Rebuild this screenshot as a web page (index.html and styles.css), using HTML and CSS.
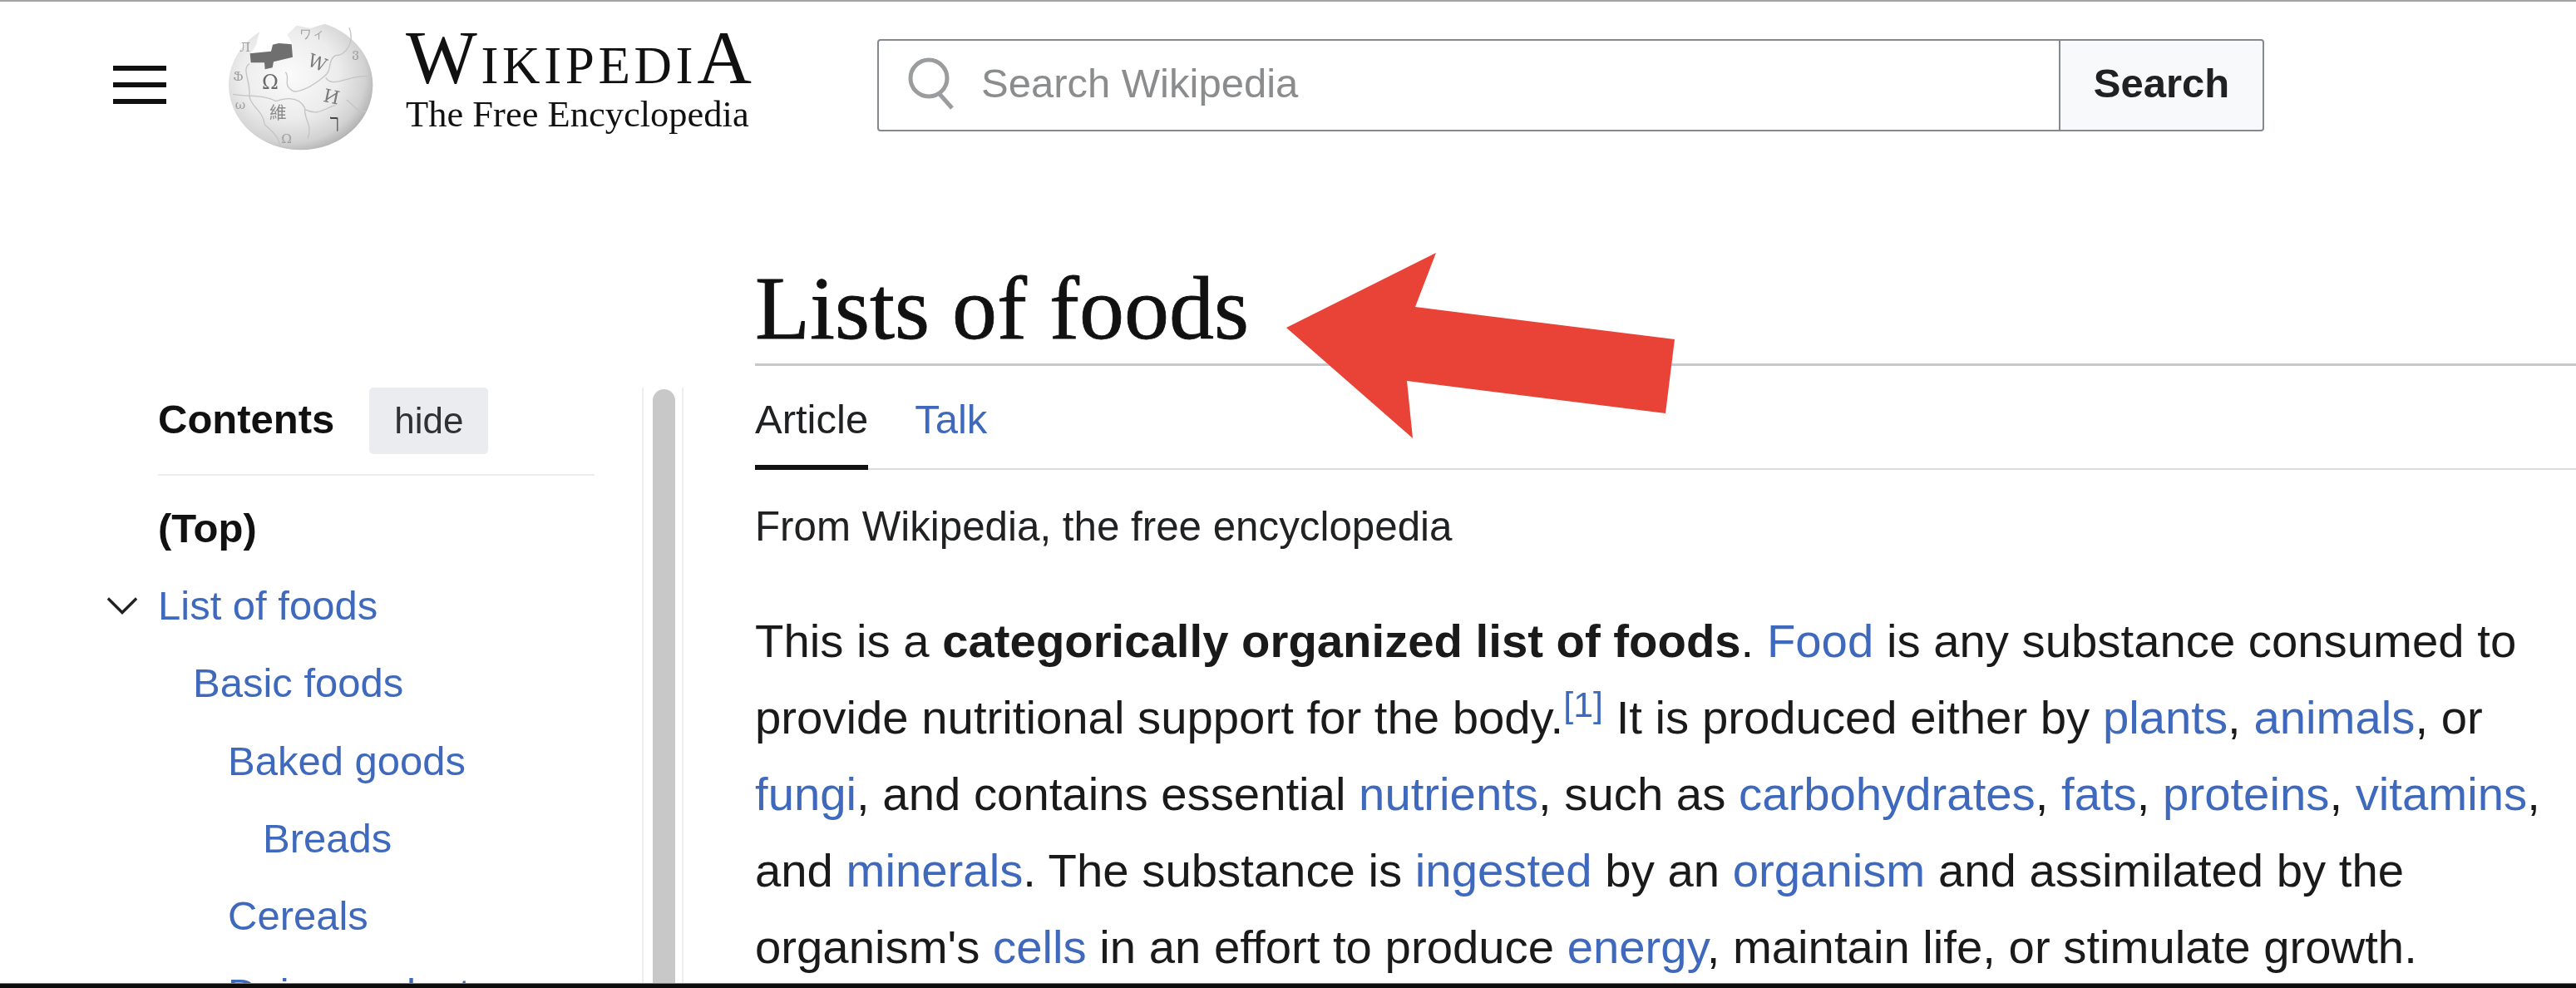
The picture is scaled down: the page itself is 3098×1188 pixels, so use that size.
FILE: index.html
```html
<!DOCTYPE html>
<html lang="en">
<head>
<meta charset="utf-8">
<title>Lists of foods - Wikipedia</title>
<link rel="stylesheet" href="styles.css">
</head>
<body>
<div class="page">
  <header class="header">
    <svg class="burger" viewBox="0 0 64 48" aria-hidden="true"><path d="M0 4h64M0 24h64M0 44h64" stroke="#101010" stroke-width="6"/></svg>
    <svg class="globe" viewBox="0 0 600 540" aria-hidden="true">
      <defs>
        <radialGradient id="gl" cx="0.42" cy="0.42" r="0.62">
          <stop offset="0" stop-color="#fbfbfb"/>
          <stop offset="0.55" stop-color="#ececec"/>
          <stop offset="0.85" stop-color="#d2d2d2"/>
          <stop offset="1" stop-color="#b0b0b0"/>
        </radialGradient>
      </defs>
      <ellipse cx="305" cy="277" rx="260" ry="234" fill="url(#gl)"/>
      <path d="M150 30V52L170 45C165 70 150 95 146 130L125 162 200 155 205 130 225 125 275 128 256 95 290 62 340 72 430 44V20H150Z" fill="#fff"/>
      <path d="M122 163 198 155 204 131 226 126 272 130 276 176 207 193 203 214 176 220 174 196 125 196Z" fill="#6f6f6f"/>
      <g fill="none" stroke="#c4c4c4" stroke-width="4">
        <path d="M250 230C270 255 235 275 280 300 320 300 360 270 390 245 420 225 400 190 430 170 470 170 500 120 480 70"/>
        <path d="M60 310C110 320 170 310 215 335 260 320 300 320 320 360 315 400 350 420 330 470"/>
        <path d="M395 250C420 290 480 240 545 245M470 330C500 350 510 380 540 370M320 365C370 390 390 360 430 350"/>
        <path d="M120 200C90 220 125 260 120 320 130 360 170 370 175 420 210 450 230 470 230 500"/>
      </g>
      <g class="glyphs">
        <text class="gl-big" x="165" y="292">Ω</text>
        <text class="gl-mid" x="0" y="0" transform="translate(325 205) rotate(22)">W</text>
        <text class="gl-mid" x="0" y="0" transform="translate(383 335) rotate(12)">И</text>
        <text class="gl-cjk" x="192" y="400">維</text>
        <text class="gl-dark" x="410" y="432">ך</text>
        <text class="gl-small" x="300" y="108">ワィ</text>
        <text class="gl-small" x="490" y="178">ვ</text>
        <text class="gl-small" x="60" y="262">Ֆ</text>
        <text class="gl-small" x="68" y="362">ω</text>
        <text class="gl-small" x="235" y="485">Ω</text>
        <text class="gl-small" x="85" y="155">Л</text>
      </g>
    </svg>
    <div class="wordmark">
      <div class="wm-title"><span class="wm-big">W</span><span class="wm-caps">IKIPEDI</span><span class="wm-big">A</span></div>
      <div class="wm-sub">The Free Encyclopedia</div>
    </div>
    <form class="search">
      <div class="search-field">
        <svg class="search-icon" viewBox="0 0 60 64" aria-hidden="true"><circle cx="26" cy="26" r="22" fill="none" stroke="#9a9c9e" stroke-width="5"/><path d="M38 44 54 62" stroke="#9a9c9e" stroke-width="5"/></svg>
        <span class="search-ph">Search Wikipedia</span>
      </div>
      <div class="search-btn">Search</div>
    </form>
  </header>

  <div class="layout">
    <aside class="side">
      <nav class="toc">
        <div class="toc-head"><strong class="toc-title">Contents</strong><span class="toc-hide">hide</span></div>
        <ul class="toc-list">
          <li class="toc-row toc-top">(Top)</li>
          <li class="toc-row"><svg class="chev" viewBox="0 0 40 24" aria-hidden="true"><path d="M2 3 20 21 38 3" fill="none" stroke="#202122" stroke-width="3.5"/></svg><a>List of foods</a></li>
          <li class="toc-row l2"><a>Basic foods</a></li>
          <li class="toc-row l3"><a>Baked goods</a></li>
          <li class="toc-row l4"><a>Breads</a></li>
          <li class="toc-row l3"><a>Cereals</a></li>
          <li class="toc-row l3"><a>Dairy products</a></li>
        </ul>
      </nav>
      <div class="scroll"><div class="thumb"></div></div>
    </aside>
    <main class="main">
      <h1 class="title">Lists of foods</h1>
      <div class="tabs"><span class="tab active">Article</span><a class="tab">Talk</a></div>
      <div class="from">From Wikipedia, the free encyclopedia</div>
      <p class="para">This is a <b>categorically organized list of foods</b>. <a>Food</a> is any substance consumed to provide nutritional support for the body.<sup>[1]</sup> It is produced either by <a>plants</a>, <a>animals</a>, or <a>fungi</a>, and contains essential <a>nutrients</a>, such as <a>carbohydrates</a>, <a>fats</a>, <a>proteins</a>, <a>vitamins</a>, and <a>minerals</a>. The substance is <a>ingested</a> by an <a>organism</a> and assimilated by the organism's <a>cells</a> in an effort to produce <a>energy</a>, maintain life, or stimulate growth.</p>
    </main>
  </div>
  <div class="bottom-bar"></div>

  <svg class="arrow" viewBox="0 0 3098 1188" aria-hidden="true"><polygon points="1547,394 1727,304 1702,369 2014,408 2003,497 1692,458 1699,527" fill="#e84336"/></svg>
</div>
</body>
</html>
```
FILE: styles.css
```css
* { box-sizing: border-box; }
html, body { margin: 0; padding: 0; background: #fff; }
body { font-family: "Liberation Sans", Arial, sans-serif; color: #202122; }
a { color: #3f69bc; text-decoration: none; }

.page {
  position: relative;
  width: 3098px;
  height: 1188px;
  display: flex;
  flex-direction: column;
  overflow: hidden;
  border-top: 2px solid #a4a4a4;
  filter: blur(0.7px);
}

.header {
  flex: none;
  height: 198px;
  display: flex;
  align-items: flex-start;
  padding-left: 136px;
}
.burger { width: 64px; height: 48px; margin-top: 76px; flex: none; }
.globe { width: 200px; height: 180px; margin-left: 60px; margin-top: 8px; flex: none; }
.glyphs text { font-family: "DejaVu Serif", serif; fill: #8b8b8b; }
.gl-big { font-size: 72px; fill: #6a6a6a !important; }
.gl-mid { font-size: 66px; fill: #7a7a7a !important; }
.gl-cjk { font-size: 62px; font-family: "Noto Sans CJK TC", sans-serif !important; fill: #8a8a8a !important; }
.gl-dark { font-size: 70px; fill: #444 !important; }
.gl-small { font-size: 46px; fill: #a0a0a0 !important; }

.wordmark { margin-left: 28px; width: 440px; flex: none; font-family: "Liberation Serif", serif; color: #111; }
.wm-title { margin-top: 26px; height: 84px; line-height: 84px; letter-spacing: 4.6px; white-space: nowrap; }
.wm-big { font-size: 91px; }
.wm-caps { font-size: 63px; }
.wm-sub { font-size: 44.5px; line-height: 44px; margin-top: 3px; white-space: nowrap; }

.search { display: flex; margin-left: 127px; margin-top: 45px; width: 1668px; height: 111px; flex: none; }
.search-field {
  flex: 1;
  display: flex;
  align-items: center;
  gap: 29px;
  padding-left: 34px;
  padding-bottom: 5px;
  border: 2px solid #85888c;
  border-radius: 4px 0 0 4px;
  background: #fff;
}
.search-icon { width: 60px; height: 64px; flex: none; }
.search-ph { font-size: 49px; color: #8a8c8e; }
.search-btn {
  width: 245px;
  display: flex;
  align-items: center;
  justify-content: center;
  padding-bottom: 5px;
  border: 2px solid #85888c;
  border-left: none;
  border-radius: 0 4px 4px 0;
  background: #f8f9fa;
  font-size: 49px;
  font-weight: bold;
}

.layout { flex: 1; min-height: 0; display: grid; grid-template-columns: 908px 1fr; }

.side { display: flex; min-height: 0; padding: 266px 0 0 190px; }
.toc { width: 525px; flex: none; }
.toc-head { display: flex; align-items: center; justify-content: flex-start; height: 80px; }
.toc-title { font-size: 49px; color: #111; padding-bottom: 4px; }
.toc-hide {
  margin-left: 42px;
  width: 143px;
  height: 80px;
  display: flex;
  align-items: center;
  justify-content: center;
  background: #eaecf0;
  border-radius: 5px;
  font-size: 44px;
  color: #303133;
}
.toc-list { list-style: none; margin: 24px 0 0; padding: 0; border-top: 2px solid #eaecf0; padding-top: 16px; }
.toc-row { height: 93.3px; display: flex; align-items: center; font-size: 49px; white-space: nowrap; }
.toc-top { font-weight: bold; color: #111; }
.chev { width: 38px; height: 24px; margin-left: -62px; margin-right: 24px; flex: none; }
.l2 { padding-left: 42px; }
.l3 { padding-left: 84px; }
.l4 { padding-left: 126px; }

.scroll {
  margin-left: 57px;
  width: 50px;
  flex: none;
  padding: 2px 8px 0 11px;
  border-left: 2px solid #eeeeee;
  border-right: 2px solid #eeeeee;
}
.thumb { height: 100%; background: #c8c8c8; border-radius: 14px 14px 0 0; }

.main { min-width: 0; display: flex; flex-direction: column; }
.title { margin: 111px 0 0; height: 129px; font-family: "Liberation Serif", serif; font-weight: normal; font-size: 108px; line-height: 120px; color: #111; border-bottom: 3px solid #c6c8cc; -webkit-text-stroke: 0.8px #111; }
.tabs { display: flex; gap: 56px; height: 125px; border-bottom: 2px solid #dcdde0; }
.tab { display: block; font-size: 49px; line-height: 66px; padding-top: 31px; height: 125px; }
.active { color: #202122; border-bottom: 6px solid #111; }
.from { font-size: 49.3px; line-height: 60px; margin-top: 38px; }
.para { margin: 62px 20px 0 0; font-size: 56.3px; line-height: 92px; color: #1a1a1a; }
.para sup { font-size: 43px; line-height: 0; color: #3f69bc; }

.bottom-bar { flex: none; height: 6px; background: #0c0c0c; border-top: 1px solid #777; }

.arrow { position: absolute; left: 0; top: -2px; width: 3098px; height: 1188px; pointer-events: none; }
```
